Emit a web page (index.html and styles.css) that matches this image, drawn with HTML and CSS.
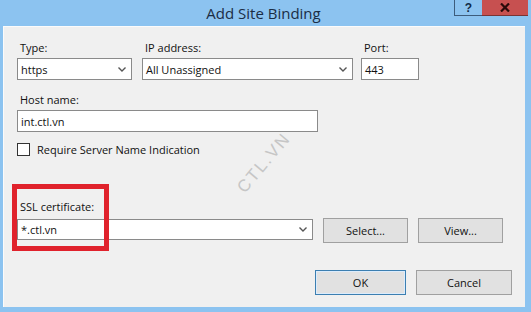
FILE: index.html
```html
<!DOCTYPE html>
<html>
<head>
  <title>Add Site Binding</title>
  <link rel="stylesheet" href="styles.css">
</head>
<body>

  <div class="window">

    <!-- Title bar -->
    <div class="titlebar">
      <span></span>
      <span class="title">Add Site Binding</span>
      <div class="caption">
        <span class="cap-btn help">?</span>
        <span class="cap-btn close">
          <svg width="10" height="9" viewBox="0 0 10 9"><path d="M1 0.5 L9 8.5 M9 0.5 L1 8.5" stroke="#2b0a0a" stroke-width="2.2"/></svg>
        </span>
      </div>
    </div>

    <!-- Dialog body -->
    <div class="dialog">

      <div class="row">
        <div class="field f-type">
          <label>Type:</label>
          <div class="select">
            <span>https</span>
            <svg class="chev" width="8" height="5" viewBox="0 0 8 5"><path d="M0.5 0.5 L4 4 L7.5 0.5" fill="none" stroke="#555" stroke-width="1.4"/></svg>
          </div>
        </div>
        <div class="field f-ip">
          <label>IP address:</label>
          <div class="select">
            <span>All Unassigned</span>
            <svg class="chev" width="8" height="5" viewBox="0 0 8 5"><path d="M0.5 0.5 L4 4 L7.5 0.5" fill="none" stroke="#555" stroke-width="1.4"/></svg>
          </div>
        </div>
        <div class="field f-port">
          <label>Port:</label>
          <div class="textbox">443</div>
        </div>
      </div>

      <div class="field f-host">
        <label>Host name:</label>
        <div class="textbox">int.ctl.vn</div>
      </div>

      <div class="check-row">
        <span class="checkbox"></span>
        <span>Require Server Name Indication</span>
      </div>

      <div class="ssl">
        <label>SSL certificate:</label>
        <div class="ssl-row">
          <div class="select cert">
            <span>*.ctl.vn</span>
            <svg class="chev" width="8" height="5" viewBox="0 0 8 5"><path d="M0.5 0.5 L4 4 L7.5 0.5" fill="none" stroke="#555" stroke-width="1.4"/></svg>
          </div>
          <button class="btn">Select...</button>
          <button class="btn">View...</button>
        </div>
      </div>

      <div class="actions">
        <button class="btn default">OK</button>
        <button class="btn cancel">Cancel</button>
      </div>

      <!-- annotation + watermark -->
      <div class="highlight"></div>
      <div class="watermark">CTL.VN</div>
    </div>
  </div>

</body>
</html>
```

FILE: styles.css
```css
html, body {
  margin: 0;
  padding: 0;
}

body {
  font-family: "Open Sans", "Liberation Sans", sans-serif;
  font-size: 11px;
  color: #111;
}

.window {
  width: 531px;
  height: 312px;
  box-sizing: border-box;
  background: #8cc3f0;
  padding: 0 6px 5px 3px;
  display: flex;
  flex-direction: column;
}

/* Title bar */
.titlebar {
  height: 26px;
  display: grid;
  grid-template-columns: 1fr auto 1fr;
  align-items: start;
}

.title {
  font-size: 15px;
  color: #1b2d45;
  padding-top: 3px;
  margin-left: -1px;
}

.caption {
  justify-self: end;
  display: flex;
  margin-right: -3px;
}

.cap-btn {
  height: 16px;
  box-sizing: border-box;
  display: flex;
  align-items: center;
  justify-content: center;
}

.help {
  width: 28px;
  border: 1px solid #3d5c7c;
  border-top: none;
  border-right: none;
  font-family: "Liberation Sans", sans-serif;
  font-weight: bold;
  font-size: 12px;
  color: #102a48;
}

.close {
  width: 46px;
  background: #c75050;
  border-bottom: 1px solid #7a3434;
}

/* Dialog body */
.dialog {
  flex: 1;
  position: relative;
  background: #f0f0f0;
  border-top: 1px solid #fbfbfb;
  border-left: 1px solid #fbfbfb;
  padding: 13px 0 0 13px;
  overflow: hidden;
}

label {
  display: block;
  height: 16px;
  line-height: 16px;
  margin-bottom: 2px;
  padding-left: 3px;
}

.row {
  display: flex;
  gap: 10px;
}

.f-port {
  margin-left: -2px;
}

.select, .textbox {
  height: 22px;
  box-sizing: border-box;
  background: #fff;
  border: 1px solid #8a8a8a;
  display: flex;
  align-items: center;
  padding: 0 5px 0 3px;
}

.select {
  justify-content: space-between;
}

.f-type .select { width: 115px; }
.f-ip .select { width: 211px; }
.f-port .textbox { width: 58px; }

.f-host {
  margin-top: 12px;
}

.f-host .textbox {
  width: 301px;
}

.check-row {
  display: flex;
  align-items: center;
  gap: 7px;
  margin-top: 10px;
  height: 15px;
}

.checkbox {
  width: 13px;
  height: 13px;
  box-sizing: border-box;
  border: 1px solid #333;
  background: #fff;
}

.ssl {
  margin-top: 42px;
}

.ssl label {
  margin-bottom: 3px;
}

.ssl-row {
  display: flex;
  align-items: flex-start;
  gap: 10px;
}

.select.cert {
  width: 296px;
  height: 21px;
  margin-top: 1px;
}

.btn {
  font-family: inherit;
  font-size: 11px;
  color: #111;
  height: 25px;
  width: 85px;
  background: #e1e1e1;
  border: 1px solid #a0a0a0;
  border-radius: 0;
  padding: 0;
}

.actions {
  display: flex;
  gap: 10px;
  margin-top: 27px;
  padding-left: 298px;
}

.btn.default {
  width: 91px;
  border-color: #3c7fb1;
  box-shadow: inset 0 0 0 1px #dcecfc;
}

.btn.cancel {
  width: 96px;
}

/* red annotation frame over the SSL field */
.highlight {
  position: absolute;
  left: 8px;
  top: 157px;
  width: 97px;
  height: 67px;
  box-sizing: border-box;
  border: 5px solid #e0222c;
}

.watermark {
  position: absolute;
  left: 224px;
  top: 126px;
  font-family: "Liberation Sans", sans-serif;
  font-size: 17px;
  letter-spacing: 2px;
  color: #c6c6c6;
  transform: rotate(-50deg);
}
```
